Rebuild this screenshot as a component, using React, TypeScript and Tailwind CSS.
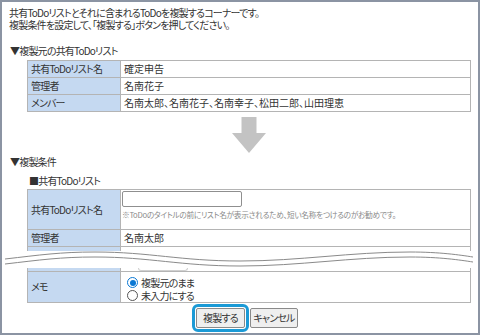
import React from 'react'

const LABEL = 'w-[93px] shrink-0 bg-[#c5d9f1] border-r border-[#b4b4b4] pl-[3px] flex items-center'
const VALUE = 'flex-1 pl-[3px] flex items-center'

function Row({ label, children }: { label: string; children: React.ReactNode }) {
  return (
    <div className="flex h-[17px] border-b border-[#b4b4b4]">
      <div className={LABEL}>{label}</div>
      {/* 値は漢字が多いので字詰めしない */}
      <div className={`${VALUE} tracking-normal`}>{children}</div>
    </div>
  )
}

function Radio({ checked, label }: { checked?: boolean; label: string }) {
  return (
    <div className="flex h-[13px] items-center gap-[3px]">
      <span
        className={`inline-flex h-[11px] w-[11px] items-center justify-center rounded-full border bg-white ${
          checked ? 'border-[#0a78d4]' : 'border-[#555]'
        }`}
      >
        {checked && <span className="h-[6px] w-[6px] rounded-full bg-[#0a78d4]" />}
      </span>
      <span>{label}</span>
    </div>
  )
}

/** 表の途中を省略する波線 */
function Wave() {
  const top = 'M3 8 C 38 4, 58 1, 93 1 C 148 1, 178 10, 238 10 C 298 10, 348 1, 408 1 C 438 1, 458 4, 471 6'
  const bottom = 'M3 13 C 38 9, 58 6, 93 6 C 148 6, 178 15, 238 15 C 298 15, 348 6, 408 6 C 438 6, 458 9, 471 11'
  return (
    <svg width="476" height="17" viewBox="0 0 476 17" className="block">
      <path d={top} fill="none" stroke="#8a8a8a" strokeWidth="1" />
      <path d={bottom} fill="none" stroke="#8a8a8a" strokeWidth="1" />
    </svg>
  )
}

export default function App() {
  return (
    <div className="h-[335px] w-[480px] overflow-hidden border-2 border-[#8b94a3] bg-white font-['Noto_Sans_CJK_JP','Noto_Sans',sans-serif] text-[10px] leading-[12px] tracking-[-0.8px] text-[#333] [font-feature-settings:'palt']">
      <div className="pl-[7px] pt-[5px]">
        <p>共有ToDoリストとそれに含まれるToDoを複製するコーナーです。</p>
        <p>複製条件を設定して、「複製する」ボタンを押してください。</p>
      </div>

      {/* 複製元 */}
      <p className="mt-[14px] pl-[8px]">▼複製元の共有ToDoリスト</p>
      <div className="ml-[25px] mt-[3px] w-[444px] border-l border-r border-t border-[#b4b4b4]">
        <Row label="共有ToDoリスト名">確定申告</Row>
        <Row label="管理者">名南花子</Row>
        <Row label="メンバー">名南太郎、名南花子、名南幸子、松田二郎、山田理恵</Row>
      </div>

      <div className="ml-[25px] mt-[5px] flex w-[444px] justify-center">
        <svg width="34" height="36" viewBox="0 0 34 36">
          <path d="M9.5 0 H24.5 V16 H34 L17 36 L0 16 H9.5 Z" fill="#c3c3c3" />
        </svg>
      </div>

      {/* 複製条件 */}
      <p className="mt-[3px] pl-[8px]">▼複製条件</p>
      <p className="mt-[7px] pl-[27px]">■共有ToDoリスト</p>
      <div className="ml-[25px] mt-[2px] w-[444px] border-l border-r border-t border-[#b4b4b4]">
        <div className="flex h-[40px] border-b border-[#b4b4b4]">
          <div className={LABEL}>共有ToDoリスト名</div>
          <div className="flex flex-1 flex-col pl-[1px] pt-[1px]">
            <div className="h-[16px] w-[120px] rounded-[2px] border border-[#8f8f8f] bg-white" />
            <p className="mt-[3px] text-[7.7px] leading-[10px] tracking-[-0.3px] text-[#8a8a8a]">
              ※ToDoのタイトルの前にリスト名が表示されるため、短い名称をつけるのがお勧めです。
            </p>
          </div>
        </div>
        <Row label="管理者">名南太郎</Row>
        <div className="flex h-[4px]">
          <div className="w-[93px] shrink-0 border-r border-[#b4b4b4] bg-[#c5d9f1]" />
          <div className="flex-1" />
        </div>
      </div>

      <Wave />

      <div className="ml-[25px] w-[444px] border-l border-r border-[#b4b4b4]">
        <div className="flex h-[4px] border-b border-[#b4b4b4]">
          <div className="w-[93px] shrink-0 border-r border-[#b4b4b4] bg-[#c5d9f1]" />
          <div className="flex-1 pl-[17px]">
            <div className="h-[3px] w-[50px] rounded-b-[3px] border-b border-l border-r border-[#d0d0d0]" />
          </div>
        </div>
        <div className="flex h-[31px] border-b border-[#b4b4b4]">
          <div className={LABEL}>メモ</div>
          <div className="flex flex-1 flex-col pl-[6px] pt-[4px]">
            <Radio checked label="複製元のまま" />
            <Radio label="未入力にする" />
          </div>
        </div>
      </div>

      <div className="mt-[5px] flex justify-center gap-[5px] pl-[14px]">
        <button className="h-[20px] w-[49px] rounded-[2px] border border-[#8a8a8a] bg-[#efefef] text-[10px] outline outline-[3px] outline-offset-[1px] outline-[#1b9ad6]">
          複製する
        </button>
        <button className="h-[20px] w-[48px] rounded-[2px] border border-[#8a8a8a] bg-[#efefef] text-[10px]">
          キャンセル
        </button>
      </div>
    </div>
  )
}
